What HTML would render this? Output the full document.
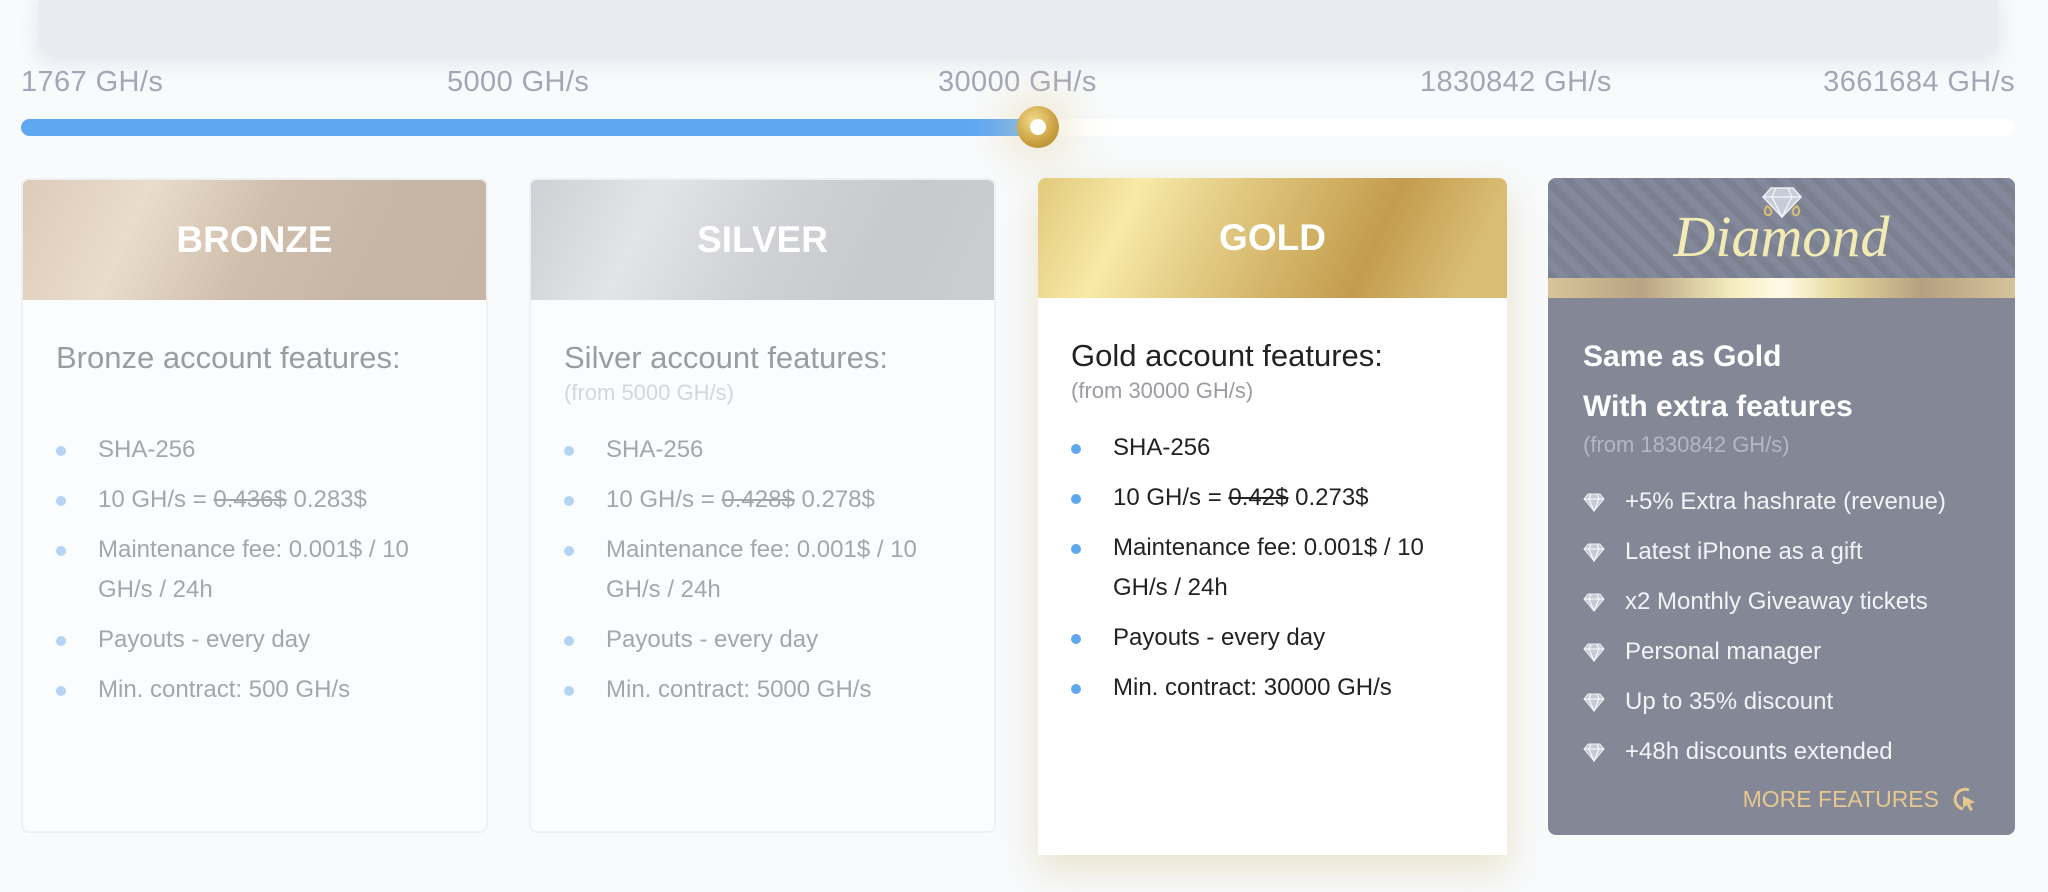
<!DOCTYPE html>
<html><head><meta charset="utf-8"><style>
*{margin:0;padding:0;box-sizing:border-box}
body{width:2048px;height:892px;background:#f8fafc;font-family:"Liberation Sans",sans-serif;position:relative;overflow:hidden}
.topbox{position:absolute;left:39px;top:-10px;width:1959px;height:65px;background:#e8ecf0;border-radius:14px;box-shadow:0 6px 20px rgba(200,205,215,.5)}
.lbl{position:absolute;top:66px;font-size:29px;letter-spacing:.4px;color:#a2a6b6;white-space:nowrap}
.track{position:absolute;left:21px;top:119px;width:1994px;height:17px;background:#fff;border-radius:9px}
.fill{position:absolute;left:21px;top:119px;width:1020px;height:17px;background:#5ea8f2;border-radius:9px 0 0 9px}
.knob{position:absolute;left:1017px;top:106px;width:42px;height:42px;border-radius:50%;background:radial-gradient(circle at 40% 35%,#f4dc8c,#c9a040 60%,#a8822a);box-shadow:0 0 40px 16px rgba(230,215,170,.45)}
.knob:after{content:"";position:absolute;left:13px;top:13px;width:16px;height:16px;border-radius:50%;background:#fff}
.card{position:absolute;top:178px;width:467px;height:655px;border-radius:8px;background:#fbfcfd;border:2px solid #eef1f4;overflow:hidden}
.hd{height:120px;display:flex;align-items:center;justify-content:center;color:#fff;font-weight:bold;font-size:37px}
.bd{padding:0 60px 0 33px;color:#9a9ca2}
.t{font-size:31px;margin-top:40px;line-height:36px;white-space:nowrap}
.f{font-size:22px;color:#d4d6da;margin-top:4px}
ul{list-style:none;margin-top:24px}
li{position:relative;padding-left:42px;font-size:24px;line-height:40px;margin-bottom:10px;color:#a4a6ac}
li:before{content:"";position:absolute;left:0;top:16px;width:10px;height:10px;border-radius:50%;background:#b3d4f5}
s{text-decoration:line-through}
.gold{background:#fff;border:none;height:677px;border-radius:8px 8px 0 0;box-shadow:0 14px 40px rgba(215,195,140,.45)}
.gold .bd,.gold .t,.gold li{color:#222}
.gold .f{color:#9a9ca2}
.gold li:before{background:#5ea8f2}
.dia{background:#848896;border:none;left:1548px}
.dia .hd{height:100px;background:repeating-linear-gradient(45deg,#7c8191 0 8px,#83889a 8px 16px);position:relative}
.dia .strip{height:20px;background:linear-gradient(90deg,#d8c49a,#b9a383 20%,#f6eec0 40%,#fffbe8 50%,#e8d9a0 62%,#b6a080 80%,#d6c39c)}
.dia .bd{color:#fff}
.dia li{color:#f2f3f6;margin-bottom:10px;padding-left:42px}
.dia li:before{display:none}
.gem{position:absolute;left:0;top:10px;width:22px;height:20px}
</style></head><body>
<div class="topbox"></div>
<div class="lbl" style="left:21px">1767 GH/s</div>
<div class="lbl" style="left:447px">5000 GH/s</div>
<div class="lbl" style="left:938px">30000 GH/s</div>
<div class="lbl" style="left:1420px">1830842 GH/s</div>
<div class="lbl" style="right:33px">3661684 GH/s</div>
<div class="track"></div><div class="fill"></div><div class="knob"></div>

<div class="card" style="left:21px">
<div class="hd" style="background:linear-gradient(115deg,#dccbb8 0%,#eadccb 25%,#cfbeac 50%,#c6b6a6 75%,#c6b5a5 100%)">BRONZE</div>
<div class="bd"><div class="t">Bronze account features:</div><div class="f">&nbsp;</div>
<ul><li>SHA-256</li><li>10 GH/s = <s>0.436$</s> 0.283$</li><li>Maintenance fee: 0.001$ / 10 GH/s / 24h</li><li>Payouts - every day</li><li>Min. contract: 500 GH/s</li></ul></div></div>

<div class="card" style="left:529px">
<div class="hd" style="background:linear-gradient(115deg,#cdd0d4 0%,#e2e4e6 25%,#d0d2d6 50%,#c7c9cd 75%,#cbcdd1 100%)">SILVER</div>
<div class="bd"><div class="t">Silver account features:</div><div class="f">(from 5000 GH/s)</div>
<ul><li>SHA-256</li><li>10 GH/s = <s>0.428$</s> 0.278$</li><li>Maintenance fee: 0.001$ / 10 GH/s / 24h</li><li>Payouts - every day</li><li>Min. contract: 5000 GH/s</li></ul></div></div>

<div class="card gold" style="left:1038px;width:469px">
<div class="hd" style="background:linear-gradient(115deg,#e2c97c 0%,#f8eaa8 20%,#e6d08a 35%,#d2b266 55%,#c49c4e 70%,#d9bd74 90%)">GOLD</div>
<div class="bd"><div class="t">Gold account features:</div><div class="f">(from 30000 GH/s)</div>
<ul><li>SHA-256</li><li>10 GH/s = <s>0.42$</s> 0.273$</li><li>Maintenance fee: 0.001$ / 10 GH/s / 24h</li><li>Payouts - every day</li><li>Min. contract: 30000 GH/s</li></ul></div></div>

<div class="card dia" style="width:467px;height:657px">
<div class="hd"><svg width="50" height="34" style="position:absolute;left:209px;top:8px" viewBox="0 0 50 34"><path d="M14 2h22l8 9-19 20L6 11z" fill="#c8ccd8" stroke="#eef0f6" stroke-width="1.5"/><path d="M6 11h38M19 2l-4 9 10 20 10-20-4-9" fill="none" stroke="#f4f6fb" stroke-width="1.2"/><path d="M10 20c-4 5-2 10 2 9s3-6-2-9zM40 20c4 5 2 10-2 9s-3-6 2-9z" fill="none" stroke="#d6bf70" stroke-width="2"/></svg>
<span style="font-family:'Liberation Serif',serif;font-style:italic;font-weight:normal;font-size:58px;color:#f3ebb4;margin-top:16px">Diamond</span></div>
<div class="strip"></div>
<div class="bd" style="padding-left:35px"><div class="t" style="color:#fff;font-weight:bold;font-size:30px;line-height:50px;margin-top:34px">Same as Gold<br>With extra features</div><div class="f" style="color:#b4b8c4;margin-top:0">(from 1830842 GH/s)</div>
<ul style="margin-top:24px">
<li><svg class="gem" viewBox="0 0 22 20"><path d="M5 2h12l4 5-10 12L1 7z" fill="#c6cad6" stroke="#eef0f6"/><path d="M1 7h20M8 2l-2 5 5 12 5-12-2-5" fill="none" stroke="#fff"/></svg>+5% Extra hashrate (revenue)</li>
<li><svg class="gem" viewBox="0 0 22 20"><path d="M5 2h12l4 5-10 12L1 7z" fill="#c6cad6" stroke="#eef0f6"/><path d="M1 7h20M8 2l-2 5 5 12 5-12-2-5" fill="none" stroke="#fff"/></svg>Latest iPhone as a gift</li>
<li><svg class="gem" viewBox="0 0 22 20"><path d="M5 2h12l4 5-10 12L1 7z" fill="#c6cad6" stroke="#eef0f6"/><path d="M1 7h20M8 2l-2 5 5 12 5-12-2-5" fill="none" stroke="#fff"/></svg>x2 Monthly Giveaway tickets</li>
<li><svg class="gem" viewBox="0 0 22 20"><path d="M5 2h12l4 5-10 12L1 7z" fill="#c6cad6" stroke="#eef0f6"/><path d="M1 7h20M8 2l-2 5 5 12 5-12-2-5" fill="none" stroke="#fff"/></svg>Personal manager</li>
<li><svg class="gem" viewBox="0 0 22 20"><path d="M5 2h12l4 5-10 12L1 7z" fill="#c6cad6" stroke="#eef0f6"/><path d="M1 7h20M8 2l-2 5 5 12 5-12-2-5" fill="none" stroke="#fff"/></svg>Up to 35% discount</li>
<li><svg class="gem" viewBox="0 0 22 20"><path d="M5 2h12l4 5-10 12L1 7z" fill="#c6cad6" stroke="#eef0f6"/><path d="M1 7h20M8 2l-2 5 5 12 5-12-2-5" fill="none" stroke="#fff"/></svg>+48h discounts extended</li>
</ul>
<div style="position:absolute;right:36px;top:606px;font-size:23px;color:#e6c88e;display:flex;align-items:center;gap:10px">MORE FEATURES <svg width="30" height="30" viewBox="0 0 30 30"><path d="M20 6a10 10 0 1 0-6 19" fill="none" stroke="#e6c88e" stroke-width="3"/><path d="M14 12l12 6-5 2 3 6-3 1-3-6-4 3z" fill="#e6c88e"/></svg></div>
</div></div>
</body></html>
